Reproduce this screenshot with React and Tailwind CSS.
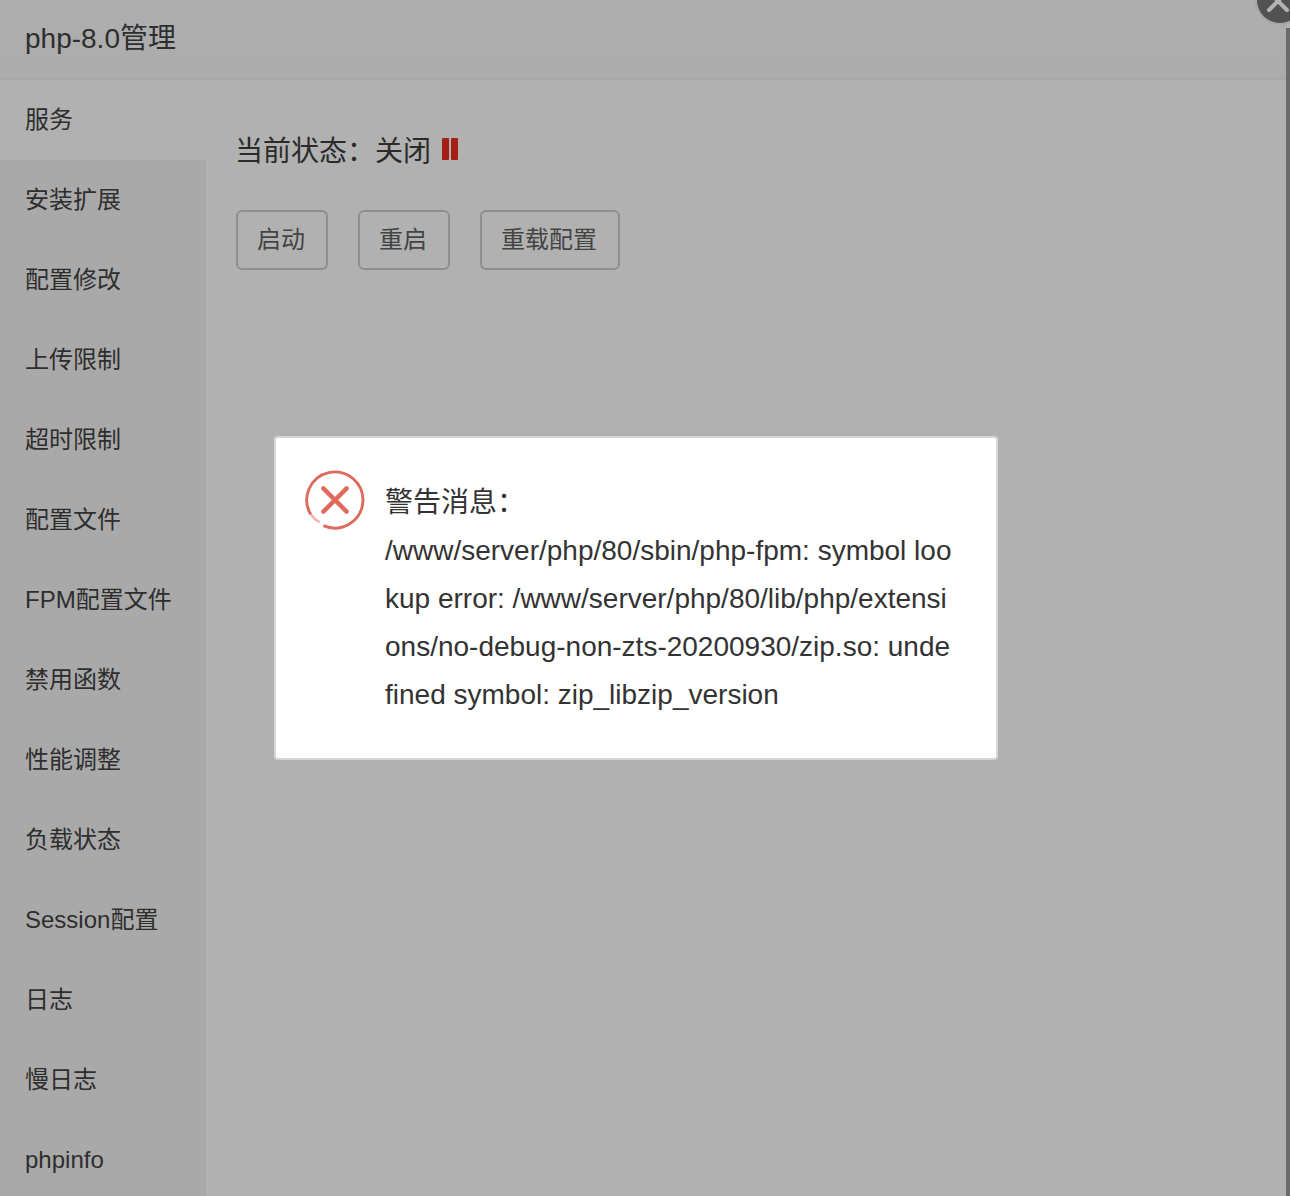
import React from "react";

const font = { fontFamily: '"Liberation Sans","Noto Sans CJK SC",sans-serif' };
const items = ["安装扩展","配置修改","上传限制","超时限制","配置文件","FPM配置文件","禁用函数","性能调整","负载状态","Session配置","日志","慢日志","phpinfo"];

function Btn({ children, w }) {
  return (
    <button className={`h-[60px] ${w} flex items-center justify-center rounded-[6px] border-2 border-[#8f8f8f] pr-[2px] text-[24px] text-[#444444]`}>
      {children}
    </button>
  );
}

export default function App() {
  return (
    <div style={font} className="relative h-[1196px] w-[1290px] overflow-hidden bg-[#b1b1b1] text-[#2b2b2b]">
      <div className="flex h-full w-[1286px] flex-col">
        <div className="flex h-[80px] shrink-0 items-center border-b-2 border-[#a8a8a8] bg-gradient-to-b from-[#aeaeae] to-[#acacac] pl-[25px] text-[28px] text-[#2e2e2e]">
          php-8.0管理
        </div>
        <div className="flex min-h-0 flex-1">
          <div className="w-[206px] shrink-0 bg-[#a9a9a9] text-[24px] text-[#2e2e2e]">
            <div className="flex h-[80px] items-center bg-[#b1b1b1] pl-[25px]">服务</div>
            {items.map((t) => (
              <div key={t} className="flex h-[80px] items-center pl-[25px]">{t}</div>
            ))}
          </div>
          <div className="flex-1 pl-[30px] pt-[50px]">
            <div className="flex h-[40px] items-center text-[28px]">
              <span className="mt-[3px] -ml-[1px]">当前状态：</span>
              <span className="mt-[3px]">关闭</span>
              <span className="mb-[2px] ml-[11px] flex gap-[2px]">
                <i className="block h-[22px] w-[7px] rounded-[1px] bg-[#a31f15]" />
                <i className="block h-[22px] w-[7px] rounded-[1px] bg-[#a31f15]" />
              </span>
            </div>
            <div className="mt-[40px] flex gap-[30px]">
              <Btn w="w-[92px]">启动</Btn>
              <Btn w="w-[92px]">重启</Btn>
              <Btn w="w-[140px]">重载配置</Btn>
            </div>
          </div>
        </div>
      </div>

      <div className="absolute bottom-0 right-0 top-[28px] w-[4px] bg-[#6b6b6b]" />

      <div className="absolute right-[-13px] top-[-23px] flex h-[46px] w-[46px] items-center justify-center rounded-full bg-[#525252] ring-2 ring-[#a6a6a6]">
        <svg width="30" height="30" viewBox="0 0 30 30" className="-ml-[5px] mt-[1px]">
          <path d="M6 6 L24 24 M24 6 L6 24" stroke="#b4b4b4" strokeWidth="4" strokeLinecap="round" />
        </svg>
      </div>

      <div className="absolute left-[274px] top-[436px] flex h-[324px] w-[724px] rounded-[4px] border-2 border-[#d6d6d6] bg-white pl-[30px] pt-[32px]">
        <svg width="60" height="60" viewBox="0 0 62 62" className="-ml-[1px] shrink-0">
          <path d="M19 57.5 A29 29 0 1 0 6 46" fill="none" stroke="#dd6a5c" strokeWidth="3" />
          <path d="M6 46 A29 29 0 0 0 15 54" fill="none" stroke="#eeb0a8" strokeWidth="2.5" />
          <path d="M19 19 L43 43 M43 19 L19 43" stroke="#e0695a" strokeWidth="4.5" strokeLinecap="round" />
        </svg>
        <div className="ml-[20px] mt-[9px] w-[570px] break-all text-[28px] leading-[48px] text-[#333333]">
          <div>警告消息：</div>
          <div>/www/server/php/80/sbin/php-fpm: symbol lookup error: /www/server/php/80/lib/php/extensions/no-debug-non-zts-20200930/zip.so: undefined symbol: zip_libzip_version</div>
        </div>
      </div>
    </div>
  );
}
